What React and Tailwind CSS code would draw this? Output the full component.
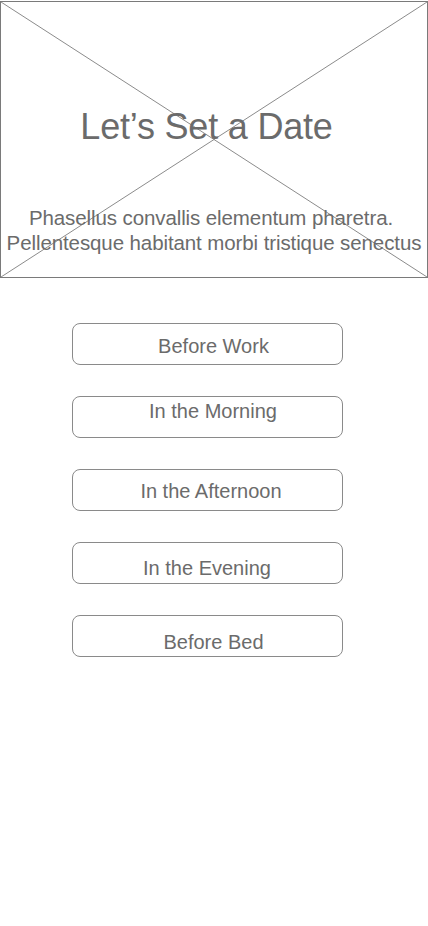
import React from 'react';

const slots = [
  { label: 'Before Work', shift: 'pl-[13px] pt-[3px]' },
  { label: 'In the Morning', shift: 'pl-[12px] pb-[12px]' },
  { label: 'In the Afternoon', shift: 'pl-[8px] pt-[1px]' },
  { label: 'In the Evening', shift: 'pl-0 pt-[10px]' },
  { label: 'Before Bed', shift: 'pl-[13px] pt-[11px]' },
];

const App = () => {
  return (
    <div className="w-[428px] min-h-[926px] bg-white font-['Liberation_Sans',Arial,sans-serif] text-[#6b6b6b]">
      <div className="relative mt-px h-[277px] border border-[#7a7a7a] flex flex-col items-center">
        <svg className="absolute inset-0 h-full w-full" viewBox="0 0 428 277" preserveAspectRatio="none">
          <line x1="0" y1="0" x2="428" y2="277" stroke="#8a8a8a" strokeWidth="1" />
          <line x1="428" y1="0" x2="0" y2="277" stroke="#8a8a8a" strokeWidth="1" />
        </svg>
        <h1 className="relative mt-[103px] pr-[15px] text-[36px] leading-[44px] tracking-[-0.2px]">Let’s Set a Date</h1>
        <p className="relative mt-[56px] text-center text-[20.5px] leading-[25px] tracking-[-0.1px]">
          <span className="pr-[6px]">Phasellus convallis elementum pharetra.</span>
          <br />
          Pellentesque habitant morbi tristique senectus
        </p>
      </div>

      <div className="mt-[45px] flex flex-col items-center gap-[31px] pr-[14px]">
        {slots.map((slot) => (
          <button
            key={slot.label}
            className={`flex h-[42px] w-[271px] items-center justify-center rounded-[8px] border border-[#8a8a8a] bg-white text-[20px] text-[#6b6b6b] ${slot.shift}`}
          >
            {slot.label}
          </button>
        ))}
      </div>
    </div>
  );
};

export default App;
